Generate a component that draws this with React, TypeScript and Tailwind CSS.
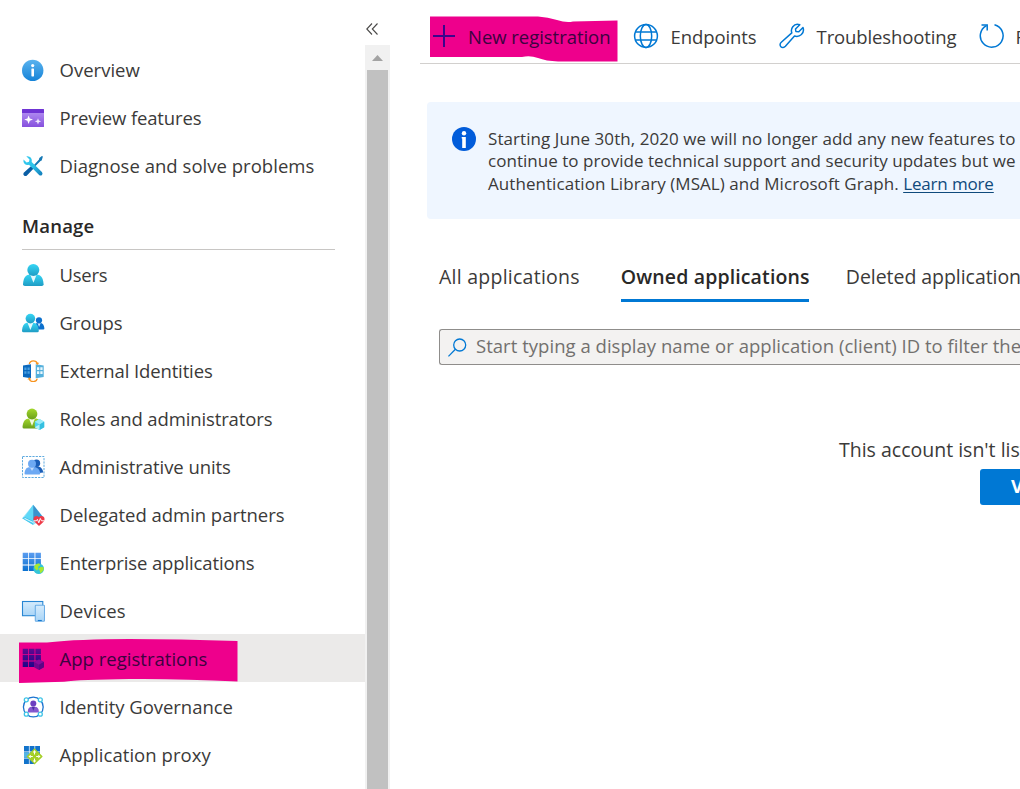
import type { ReactNode } from "react";

function Icon({ children }: { children: ReactNode }) {
  return (
    <svg viewBox="0 0 24 24" className="size-6 shrink-0" fill="none">
      {children}
    </svg>
  );
}

const OverviewIcon = () => (
  <Icon>
    <defs>
      <linearGradient id="ov" x1="0" y1="0" x2="0" y2="1">
        <stop stopColor="#5bb3ee" />
        <stop offset="1" stopColor="#1583d8" />
      </linearGradient>
    </defs>
    <circle cx="11.7" cy="12.4" r="10.7" fill="url(#ov)" />
    <circle cx="11.7" cy="7.6" r="1.6" fill="#fff" />
    <rect x="10.4" y="10.4" width="2.6" height="8" rx=".6" fill="#fff" />
  </Icon>
);

const PreviewIcon = () => (
  <Icon>
    <defs>
      <linearGradient id="pv" x1="0" y1="0" x2="0" y2="1">
        <stop stopColor="#b998f5" />
        <stop offset="1" stopColor="#8650dd" />
      </linearGradient>
    </defs>
    <rect x="1" y="3" width="22" height="18" rx=".6" fill="url(#pv)" />
    <path d="M1 3.6q0-.6.6-.6h20.8q.6 0 .6.6V7H1z" fill="#6f34d4" />
    <path d="M7.6 9.400l1.200 3.100 3.200 1.100-3.200 1.100-1.200 3.200-1.200-3.200-3.200-1.100 3.200-1.100z" fill="#fff" />
    <path d="M17 12.200l.9 2.200 2.300.9-2.300.9-.9 2.200-.9-2.200-2.300-.9 2.300-.9z" fill="#f1e8ff" />
  </Icon>
);

const DiagnoseIcon = () => (
  <Icon>
    <defs>
      <linearGradient id="dg1" x1="0" y1="0" x2="1" y2="1">
        <stop stopColor="#32c8ee" />
        <stop offset=".5" stopColor="#2fc4ea" />
        <stop offset="1" stopColor="#1179b8" />
      </linearGradient>
    </defs>
    <path d="M21.9 2.4l-1-.5-2.6 2.2-.3 1.3-6.2 6.8 1.2 1.2L19.5 7l1.200-.4z" fill="#1578b5" />
    <path d="M10.200 12l2.400 2.400-6.900 7.300q-1.400.9-2.700-.3t-.3-2.700z" fill="#0a5ea5" />
    <path d="M5.300 2.300q3-.5 4.600 1.400 1.400 1.800.8 4.200l10.200 10.200q1.200 1.400.1 2.800-1.400 1.300-2.900.1L8 10.700q-2.500.7-4.300-.8-1.800-1.800-1.200-4.400l3.100 2.900 2.400-.6.500-2.300z" fill="url(#dg1)" />
  </Icon>
);

const UsersIcon = () => (
  <Icon>
    <defs>
      <linearGradient id="us" x1="0" y1="0" x2="0" y2="1">
        <stop stopColor="#35d6f5" />
        <stop offset="1" stopColor="#1f9cc4" />
      </linearGradient>
    </defs>
    <path d="M2 22.200c.5-7 3-9.800 7.300-9.800h6c4.200 0 6.800 2.800 7.300 9.800q0 1.800-1.800 1.800H3.800Q2 24 2 22.200z" fill="url(#us)" />
    <path d="M9 12.300h6.700l-3.200 8.500z" fill="#e3f8fc" />
    <circle cx="12.300" cy="8" r="6" fill="url(#us)" />
  </Icon>
);

const GroupsIcon = () => (
  <Icon>
    <path d="M12.500 19c.3-4.200 2-6 4.600-6h2c2.700 0 4.100 2 4.300 5.500q0 1.100-1.100 1.100h-9.800z" fill="#0b70cd" />
    <path d="M16.500 13h3.200l-1.600 4z" fill="#cfe6fa" />
    <circle cx="18" cy="10.300" r="3.100" fill="#0b70cd" />
    <path d="M1 20.700c.4-5.400 2.400-7.900 6-7.900h4.600c3.600 0 5.800 2.500 6.200 7.900q0 1.500-1.500 1.500H2.500Q1 22.200 1 20.700z" fill="url(#us)" />
    <path d="M6.500 12.800h5.800L9.400 20z" fill="#e8fafd" />
    <circle cx="9.400" cy="8.600" r="4.800" fill="url(#us)" />
  </Icon>
);

const ExternalIcon = () => (
  <Icon>
    <path d="M2 7.500l8-1.300v14l-8-1.200z" fill="#0b69bd" />
    <path d="M3.300 9.500h2.200V12H3.300zM6.500 9.500h2.200V12H6.500zM3.300 13.300h2.200v2.500H3.300zM6.500 13.300h2.200v2.500H6.500z" fill="#4b9fe0" />
    <path d="M14.700 6.200l8 1.300V19l-8 1.200z" fill="#55b0dc" />
    <path d="M16 9.200h2.300V12H16zM19.300 9.200h2.300V12h-2.300zM16 13.300h2.300v2.800H16zM19.300 13.300h2.300v2.800h-2.300z" fill="#e9f7fd" />
    <path d="M8.300 6q.7-3.200 4-3.200t4 2.600M16.300 20.700q-.7 2.900-4 2.900t-4-2.500" stroke="#f7931e" strokeWidth="1.300" />
    <path d="M14.300 4.800h4l-2 2.200zM6.400 21.500h4l-2-2.200z" fill="#f7931e" />
  </Icon>
);

const RolesIcon = () => (
  <Icon>
    <defs>
      <linearGradient id="rl" x1="0" y1="0" x2="0" y2="1">
        <stop stopColor="#a3d82c" />
        <stop offset="1" stopColor="#6a9f1a" />
      </linearGradient>
    </defs>
    <path d="M1.500 21c.5-5.800 2.800-8.500 6.500-8.500h6c4 0 6 2.500 6.500 8.500q0 1.600-1.500 1.600H3Q1.500 22.600 1.500 21z" fill="url(#rl)" />
    <path d="M8 12.500h6l-3 7.500z" fill="#f2fae1" />
    <circle cx="11" cy="8" r="5.400" fill="url(#rl)" />
    <path d="M18.500 13l4.700 2.700v5.600l-4.700 2.700-4.700-2.700v-5.600z" fill="#4fd4ed" />
    <path d="M18.500 13l4.700 2.700-4.700 2.800-4.700-2.800z" fill="#9aeaf7" />
    <path d="M18.500 18.500l4.700-2.800v5.600L18.500 24z" fill="#35bfe0" />
    <path d="M13.800 21.300l4.700-2.800v5.500z" fill="#b5f1fa" />
  </Icon>
);

const UnitsIcon = () => (
  <Icon>
    <rect x="1.500" y="2.500" width="21.500" height="21" stroke="#5eaadf" strokeDasharray="2.200 1.100" />
    <path d="M14 19.500l-1-7h4.500c3 .5 4.500 3.200 4.700 6z" fill="#1b5eb8" />
    <circle cx="15.500" cy="9.200" r="3.700" fill="#1b5eb8" />
    <path d="M3.500 19.500c.3-4.200 2.200-6.200 5-6.200h5c3 0 5.200 2.200 5.700 6.200q0 1-1 1H4.500q-1 0-1-1z" fill="#6da9f3" />
    <path d="M8.800 13.300h4.400L11 17z" fill="#c3dcfb" />
    <circle cx="11" cy="9.800" r="4" fill="#6da9f3" />
  </Icon>
);

const PartnersIcon = () => (
  <Icon>
    <path d="M12.200 2.700L23 16l-10.800 7L1.200 16.300z" fill="#9be3fa" />
    <path d="M12.200 2.700L3.700 14.700l8.500 3.800z" fill="#5fd8f7" />
    <path d="M12.200 2.700l9.500 12-9.500 3.800z" fill="#3a93cd" />
    <path d="M1.200 16.300l2.500-1.600 8.500 3.800V23z" fill="#45c8ee" />
    <path d="M3.500 16.300l8.700 4.200" stroke="#e3f8fe" strokeWidth="1" />
    <path d="M18 24l-4.500-4.300c-1.500-1.700-1.300-4 .3-5.200 1.500-1 3.100-.6 4.200.8 1.100-1.400 3-1.800 4.300-.7 1.600 1.300 1.700 3.500.3 5.100z" fill="#ee3a48" />
    <path d="M12.800 18.800h2.600l1-1.500 1.400 3.500 1.500-4.300 1.200 2.300h2.500" stroke="#fff" strokeWidth="1" />
  </Icon>
);

const gridCells = "M1.700 2.700h5.500v5.500H1.700zM8 2.700h5.500v5.500H8zM14.400 2.700h5.500v5.500h-5.500zM1.700 9h5.500v5.500H1.700zM8 9h5.500v5.500H8zM14.400 9h5.500v5.500h-5.500zM1.700 15.400h5.500V21H1.700zM8 15.400h5.500V21H8zM14.400 15.400h5.500V21h-5.500z";

const EnterpriseIcon = () => (
  <Icon>
    <defs>
      <linearGradient id="en" x1="0" y1="0" x2="0" y2="1">
        <stop stopColor="#5b9df0" />
        <stop offset="1" stopColor="#0a71d0" />
      </linearGradient>
    </defs>
    <path d={gridCells} fill="url(#en)" />
    <circle cx="17.700" cy="18.700" r="5.300" fill="#35c5d8" />
    <path d="M13.500 15.500q2.500-2.500 5.200-1.800l.3 1.800-2 1.200.5 2-1.500 1.800-2.500-2.200zM19.500 17l3.300.3q.5 3-2 4.900l-1.600 1-.4-2.400-1.200-1.800z" fill="#a9e82e" />
  </Icon>
);

const DevicesIcon = () => (
  <Icon>
    <defs>
      <linearGradient id="dv" x1="0" y1="0" x2="0" y2="1">
        <stop stopColor="#d5ebfc" />
        <stop offset="1" stopColor="#a9d5f7" />
      </linearGradient>
    </defs>
    <rect x="1.500" y="3.500" width="20.300" height="14.200" fill="url(#dv)" stroke="#2886d3" strokeWidth="1.100" />
    <rect x="14.300" y="7.300" width="9.200" height="16" rx=".7" fill="url(#dv)" stroke="#6eaee6" strokeWidth="1.100" />
    <path d="M16.800 22.500h4" stroke="#1678cf" strokeWidth="1.100" />
  </Icon>
);

const AppRegIcon = () => (
  <Icon>
    <defs>
      <linearGradient id="ar" x1="0" y1="0" x2="0" y2="1">
        <stop stopColor="#600a90" />
        <stop offset="1" stopColor="#1c0588" />
      </linearGradient>
    </defs>
    <path d={gridCells} fill="url(#ar)" />
    <path d="M18 13.400l4.900 2.600v5.300L18 24l-4.900-2.700V16z" fill="#70068e" />
    <path d="M18 13.400l4.900 2.600L18 18.700 13.100 16z" fill="#8b0a9c" />
    <path d="M18 18.700l4.900-2.700v5.300L18 24z" fill="#5b0685" />
  </Icon>
);

const GovernanceIcon = () => (
  <Icon>
    <circle cx="12.300" cy="13" r="9.900" stroke="#1c74d0" strokeWidth="1.300" />
    <g fill="#fff" stroke="#3fc4e6" strokeWidth="1.300">
      <circle cx="5.300" cy="5.800" r="2" />
      <circle cx="19.300" cy="5.800" r="2" />
      <circle cx="5.300" cy="20.200" r="2" />
      <circle cx="19.300" cy="20.200" r="2" />
    </g>
    <path d="M6.700 17.500c.3-3.200 1.600-4.700 4-4.700h3.200c2.400 0 3.700 1.500 4 4.700q0 .9-.9.900H7.600q-.9 0-.9-.9z" fill="#8559cf" />
    <path d="M10.700 12.800h3.200l-1.600 4z" fill="#4c2fa6" />
    <circle cx="12.300" cy="9.500" r="3" fill="#6b3fc0" />
  </Icon>
);

const ProxyIcon = () => (
  <Icon>
    <path d="M3 4h4.900v5.500H3zM8.600 4h4.900v5.500H8.600zM14.200 4H19v5.500h-4.800zM3 10.200h4.900v5.500H3zM8.600 10.200h4.900v5.500H8.600zM14.200 10.200H19v5.500h-4.800zM3 16.400h4.900V22H3zM8.600 16.400h4.900V22H8.600z" fill="#1273cb" />
    <path d="M3 10.200h4.900v5.500H3z" fill="#54b3e4" />
    <path d="M13.500 6.200l7.800 7.700q.6.600 0 1.200l-7.800 7.300-7.500-7.300q-.6-.6 0-1.200z" fill="#a5cf27" />
    <path d="M13.500 8l1.800 2.400h-3.600zM13.500 20.800l1.800-2.400h-3.600zM7.500 14.500l2.300-1.800v3.600zM19.600 14.500l-2.300-1.800v3.600z" fill="#fff" />
    <path d="M13.500 10v2.500M13.500 16.500V19M9.500 14.500h2.300M15.200 14.500h2.300" stroke="#fff" strokeWidth="1" />
  </Icon>
);

type Item = { label: string; icon: ReactNode; tracking: string; active?: boolean };

const topItems: Item[] = [
  { label: "Overview", icon: <OverviewIcon />, tracking: "tracking-[0.02px]" },
  { label: "Preview features", icon: <PreviewIcon />, tracking: "tracking-[-0.14px]" },
  { label: "Diagnose and solve problems", icon: <DiagnoseIcon />, tracking: "tracking-[0.03px]" },
];

const manageItems: Item[] = [
  { label: "Users", icon: <UsersIcon />, tracking: "tracking-[-0.25px] pt-0.5" },
  { label: "Groups", icon: <GroupsIcon />, tracking: "tracking-[-0.1px] pt-0.5" },
  { label: "External Identities", icon: <ExternalIcon />, tracking: "tracking-[-0.13px] pt-0.5" },
  { label: "Roles and administrators", icon: <RolesIcon />, tracking: "tracking-[-0.12px] pt-0.5" },
  { label: "Administrative units", icon: <UnitsIcon />, tracking: "tracking-[-0.06px] pt-0.5" },
  { label: "Delegated admin partners", icon: <PartnersIcon />, tracking: "tracking-[-0.03px] pt-0.5" },
  { label: "Enterprise applications", icon: <EnterpriseIcon />, tracking: "tracking-[-0.12px] pt-0.5" },
  { label: "Devices", icon: <DevicesIcon />, tracking: "tracking-[0.05px] pt-0.5" },
  { label: "App registrations", icon: <AppRegIcon />, tracking: "tracking-[0.02px] pt-0.5", active: true },
  { label: "Identity Governance", icon: <GovernanceIcon />, tracking: "tracking-[-0.04px] pt-0.5" },
  { label: "Application proxy", icon: <ProxyIcon />, tracking: "tracking-[0.06px] pt-0.5" },
];

function NavItem({ label, icon, tracking, active }: Item) {
  return (
    <li className={`relative flex h-12 items-center gap-[14.5px] pl-[21px] ${active ? "bg-[#ebeae9] text-[#3c0340]" : ""}`}>
      {active && (
        <svg className="absolute left-[19px] top-[5px]" width="219" height="44" viewBox="0 0 219 44">
          <path d="M0 3.500L28 3.500Q60 0 110 0T218.500 2V42.500Q160 39.500 110 40T45 42.800L0 44z" fill="#ee008c" />
        </svg>
      )}
      <span className="relative">{icon}</span>
      <span className={`relative whitespace-nowrap ${tracking}`}>{label}</span>
    </li>
  );
}

function Sidebar() {
  return (
    <nav className="w-[365px] shrink-0 pt-[46px]">
      <ul>
        {topItems.map((i) => (
          <NavItem key={i.label} {...i} />
        ))}
      </ul>
      <h2 className="ml-[22px] mr-[30px] flex h-[60px] items-center border-b border-[#c8c6c4] pt-[13px] font-semibold tracking-[0.2px] text-[#292827]">
        Manage
      </h2>
      <ul>
        {manageItems.map((i) => (
          <NavItem key={i.label} {...i} />
        ))}
      </ul>
    </nav>
  );
}

function ScrollColumn() {
  return (
    <div className="flex w-[25px] shrink-0 flex-col">
      <div className="flex h-[45px] items-center pl-px pt-[13px]">
        <svg width="13" height="12" viewBox="0 0 13 12" fill="none" stroke="#4a4948" strokeWidth="1.100">
          <path d="M6 .5L.8 6 6 11.500M11.500 .5L6.300 6l5.200 5.500" />
        </svg>
      </div>
      <div className="flex flex-1 flex-col bg-[#f1f1f1]">
        <div className="flex h-[25px] items-center justify-center">
          <svg width="11" height="6" viewBox="0 0 11 6">
            <path d="M5.500 0L11 6H0z" fill="#a3a3a3" />
          </svg>
        </div>
        <div className="mx-[2px] flex-1 bg-[#c1c1c1]" />
      </div>
    </div>
  );
}

function Toolbar() {
  return (
    <div className="relative flex h-16 items-center border-b border-[#d2d0ce] pt-[10px]">
      <svg className="absolute left-[10px] top-[16px]" width="188" height="46" viewBox="0 0 188 46">
        <path d="M0 .5H108Q118 1 127 4T143 5.500L187.500 4.500V45.500L128 45.500Q116 45 108 42T92 41H0z" fill="#ee008c" />
      </svg>
      <div className="relative flex items-center pl-3 text-[#3c0340]">
        <svg width="24" height="24" viewBox="0 0 24 24" className="mt-[-1px]" fill="none" stroke="#3c058c" strokeWidth="2">
          <path d="M12 1v22M1 12h22" />
        </svg>
        <span className="ml-3 whitespace-nowrap tracking-[-0.04px]">New registration</span>
      </div>
      <div className="ml-[23px] flex items-center">
        <svg width="26" height="26" viewBox="0 0 26 26" className="-mt-0.5" fill="none" stroke="#0078d4" strokeWidth="1.500">
          <circle cx="13" cy="13" r="11.400" />
          <ellipse cx="13" cy="13" rx="5.700" ry="11.400" />
          <path d="M2.500 9h21M2.500 17h21" />
        </svg>
        <span className="ml-[11px] whitespace-nowrap tracking-[-0.08px]">Endpoints</span>
      </div>
      <div className="ml-[22px] flex items-center">
        <svg width="26" height="26" viewBox="0 0 26 26" className="-mt-0.5" fill="none" stroke="#0078d4" strokeWidth="1.500" strokeLinejoin="round">
          <path d="M20.800 1.800C18.500.9 15.500 1.500 13.800 3.700c-1.500 1.900-1.700 4.200-1 6.200L2.300 19.300c-1.500 1.400-1.600 3.200-.4 4.400s3.100 1 4.500-.5L15.500 13c2.300.8 5 .3 6.900-1.500 2-2 2.500-4.600 1.600-7l-4.200 4.200-2.900-.2-.4-2.500z" />
        </svg>
        <span className="ml-[12px] whitespace-nowrap tracking-[-0.12px]">Troubleshooting</span>
      </div>
      <div className="ml-[22px] flex items-center">
        <svg width="26" height="26" viewBox="0 0 26 26" className="-mt-0.5" fill="none" stroke="#0078d4" strokeWidth="1.500">
          <path d="M16.500 1.700A11.400 11.400 0 1 1 8.500 2.600" />
          <path d="M3.500 1.900h5.700v5.700" />
        </svg>
        <span className="ml-[11px] whitespace-nowrap">Refresh</span>
      </div>
    </div>
  );
}

function Banner() {
  return (
    <div className="ml-[7px] mt-[38px] flex h-[117px] rounded-l bg-[#eff6ff] pl-[25px] pt-[25px]">
      <svg width="24" height="24" viewBox="0 0 24 24" className="shrink-0">
        <circle cx="12" cy="12" r="12" fill="#015cda" />
        <circle cx="12" cy="6.200" r="2.200" fill="#fff" />
        <path d="M9.700 10h4.100v11h-3.600v-9.400h-.5z" fill="#fff" />
      </svg>
      <div className="ml-3 whitespace-nowrap pt-[0.5px] text-[17px] leading-[22.5px]">
        <div className="tracking-[0.07px]">Starting June 30th, 2020 we will no longer add any new features to</div>
        <div className="tracking-[0.03px]">continue to provide technical support and security updates but we</div>
        <div>
          <span className="tracking-[0.06px]">Authentication Library (MSAL) and Microsoft Graph. </span>
          <a className="tracking-[-0.15px] text-[#0f4a7c] underline decoration-1 underline-offset-2">Learn more</a>
        </div>
      </div>
    </div>
  );
}

export default function App() {
  return (
    <div className="flex h-[789px] w-[1020px] overflow-hidden bg-white font-['Open_Sans',sans-serif] text-[18.5px] leading-7 font-[370] text-[#3b3a39]">
      <Sidebar />
      <ScrollColumn />
      <main className="ml-[30px] w-[600px] shrink-0 overflow-hidden">
        <Toolbar />
        <Banner />
        <div className="ml-[19px] mt-[44px] flex h-[39px] gap-[41px] whitespace-nowrap text-[19.5px]">
          <div className="tracking-[0.25px]">All applications</div>
          <div className="w-[188px] shrink-0 border-b-[3px] border-[#0078d4] font-semibold tracking-[0.13px] text-[#292827]">
            Owned applications
          </div>
          <div className="-ml-1 tracking-[-0.05px]">Deleted applications</div>
        </div>
        <div className="ml-[19px] mt-[27px] flex h-9 items-center rounded-l-[3px] border border-r-0 border-[#8f8d8b] bg-[#f3f2f1] pl-2 text-[#72706e]">
          <svg width="19" height="19" viewBox="0 0 19 19" className="shrink-0" fill="none" stroke="#0078d4" strokeWidth="1.300">
            <circle cx="11.700" cy="7" r="6" />
            <path d="M7.400 11.300L.4 18.400" />
          </svg>
          <span className="ml-[9px] whitespace-nowrap pb-0.5 tracking-[0.03px]">
            Start typing a display name or application (client) ID to filter these results
          </span>
        </div>
        <p className="ml-[419px] mt-[71px] whitespace-nowrap text-[19.5px]">This account isn't listed as an owner</p>
        <button className="ml-[560px] mt-[5px] block h-9 w-[200px] rounded-[3px] bg-[#0078d4] pb-0.5 pl-[31px] text-left font-bold whitespace-nowrap text-white">
          View all
        </button>
      </main>
    </div>
  );
}
